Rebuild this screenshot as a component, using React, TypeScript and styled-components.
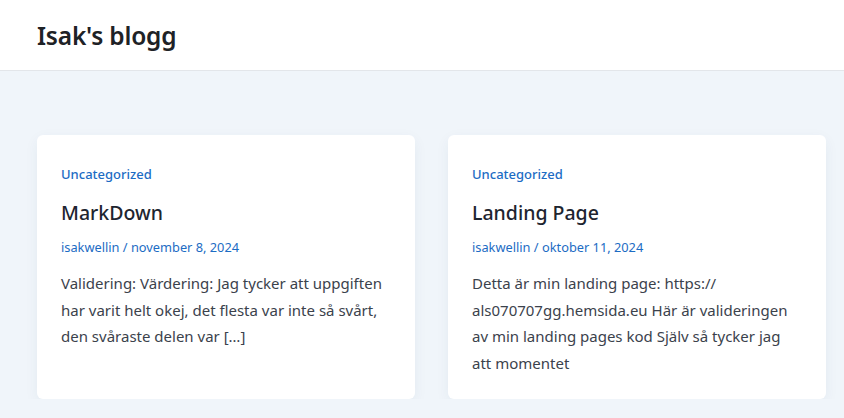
import React from "react";
import styled, { createGlobalStyle } from "styled-components";

const Global = createGlobalStyle`
  html, body { margin: 0; padding: 0; }
  body {
    background: #f0f5fa;
    font-family: "Noto Sans", "Open Sans", "Liberation Sans", sans-serif;
    -webkit-font-smoothing: antialiased;
  }
`;

const Header = styled.header`
  height: 71px;
  background: #ffffff;
  border-bottom: 1px solid #e3e6ea;
  display: flex;
  align-items: center;
  padding: 0 37px;
  box-sizing: border-box;
`;

const SiteTitle = styled.h1`
  margin: 0;
  font-size: 24.5px;
  font-weight: 600;
  color: #1e2226;
  letter-spacing: -0.2px;
`;

const Main = styled.main`
  display: grid;
  grid-template-columns: 378px 378px;
  gap: 33px;
  padding: 64px 37px 0;
`;

const Card = styled.article`
  background: #ffffff;
  border-radius: 6px;
  box-shadow: 0 4px 14px rgba(30, 60, 110, 0.06);
  padding: 28px 24px 22px;
  height: 264px;
  box-sizing: border-box;
`;

const Category = styled.a`
  display: block;
  font-size: 13px;
  font-weight: 500;
  color: #1c6cc4;
  text-decoration: none;
  line-height: 22px;
`;

const PostTitle = styled.h2`
  margin: 14px 0 0;
  font-size: 19.5px;
  font-weight: 500;
  color: #1e2530;
  line-height: 28px;
`;

const Meta = styled.div`
  margin-top: 10px;
  font-size: 12.8px;
  color: #1c6cc4;
  line-height: 20px;
`;

const Excerpt = styled.p`
  margin: 13px 0 0;
  font-size: 15px;
  line-height: 26.7px;
  color: #3b424c;
`;

const posts = [
  {
    title: "MarkDown",
    meta: "isakwellin / november 8, 2024",
    excerpt:
      "Validering: Värdering: Jag tycker att uppgiften har varit helt okej, det flesta var inte så svårt, den svåraste delen var […]",
  },
  {
    title: "Landing Page",
    meta: "isakwellin / oktober 11, 2024",
    excerpt:
      "Detta är min landing page: https:// als070707gg.hemsida.eu Här är valideringen av min landing pages kod Själv så tycker jag att momentet",
  },
];

export default function App() {
  return (
    <>
      <Global />
      <Header>
        <SiteTitle>Isak's blogg</SiteTitle>
      </Header>
      <Main>
        {posts.map((p) => (
          <Card key={p.title}>
            <Category href="#">Uncategorized</Category>
            <PostTitle>{p.title}</PostTitle>
            <Meta>{p.meta}</Meta>
            <Excerpt>{p.excerpt}</Excerpt>
          </Card>
        ))}
      </Main>
    </>
  );
}
